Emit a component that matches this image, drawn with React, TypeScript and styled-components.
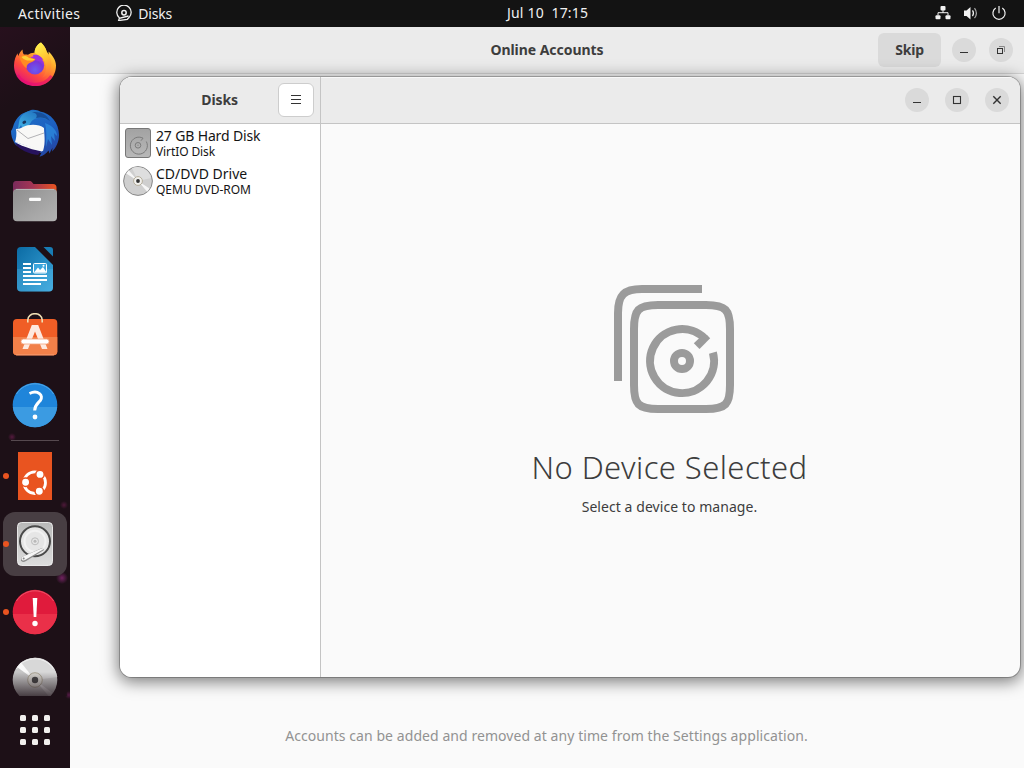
import React from "react";
import styled, { createGlobalStyle } from "styled-components";

const GlobalStyle = createGlobalStyle`
  * { box-sizing: border-box; }
  html, body, #root { margin: 0; width: 1024px; height: 768px; overflow: hidden; }
  body { font-family: "Noto Sans", "Open Sans", sans-serif; font-size: 14px; }
  svg { display: block; flex: none; }
  button { font: inherit; border: 0; padding: 0; margin: 0; color: inherit; }
`;

const Screen = styled.div`
  width: 1024px;
  height: 768px;
  display: flex;
  flex-direction: column;
  background: #1d1017;
`;

const TopBar = styled.header`
  height: 27px;
  flex: none;
  display: grid;
  grid-template-columns: 507px 1fr auto;
  align-items: center;
  padding-bottom: 1px;
  background: #131313;
  color: #f0f0f0;
`;

const BarLeft = styled.div`
  display: flex;
  align-items: center;
  padding-left: 18px;
`;

const BarRight = styled.div`
  display: flex;
  align-items: center;
  gap: 12px;
  padding-right: 17px;
`;

const Label = styled.span<{ $spacing?: number; $size?: number }>`
  font-size: ${(p) => p.$size ?? 14}px;
  letter-spacing: ${(p) => p.$spacing ?? 0}px;
  line-height: 20px;
  white-space: pre;
`;

const BarLabel = styled(Label)`
  padding-top: 2px;
`;

const AppMenu = styled.div`
  display: flex;
  align-items: center;
  gap: 6px;
  margin-left: 36px;
`;

const Workspace = styled.div`
  flex: 1;
  min-height: 0;
  display: flex;
`;

const Dock = styled.nav`
  width: 70px;
  flex: none;
  display: flex;
  flex-direction: column;
  align-items: center;
  gap: 4px;
  padding-top: 6px;
  background:
    radial-gradient(circle at 62px 551px, rgba(140, 40, 120, 0.75), transparent 6px),
    radial-gradient(circle at 64px 478px, rgba(110, 30, 80, 0.6), transparent 4px),
    radial-gradient(circle at 12px 410px, rgba(110, 30, 80, 0.7), transparent 4px),
    radial-gradient(circle at 69px 668px, rgba(110, 30, 90, 0.7), transparent 4px),
    linear-gradient(145deg, #27101d 0, #1d1017 70px, #1d1017 100%);
`;

const DockItem = styled.div<{ $active?: boolean; $clipped?: boolean }>`
  position: relative;
  width: 64px;
  height: ${(p) => (p.$clipped ? 48 : 64)}px;
  flex: none;
  overflow: ${(p) => (p.$clipped ? "hidden" : "visible")};
  display: flex;
  justify-content: center;
  align-items: ${(p) => (p.$clipped ? "flex-start" : "center")};
  padding-top: ${(p) => (p.$clipped ? 8 : 0)}px;
  border-radius: ${(p) => (p.$clipped ? 0 : 12)}px;
  background: ${(p) => (p.$active ? "#483e43" : "transparent")};
`;

const RunningDot = styled.i`
  position: absolute;
  left: 0;
  top: 29px;
  width: 6px;
  height: 6px;
  border-radius: 50%;
  background: #e95420;
`;

const DockSeparator = styled.hr`
  width: 48px;
  height: 1px;
  flex: none;
  margin: -1px 0;
  border: 0;
  background: #56494f;
`;

const BottomFade = styled.div`
  position: absolute;
  inset: 24px 0 0 0;
  background: linear-gradient(rgba(29, 16, 23, 0), rgba(29, 16, 23, 0.75));
`;

const AppsButton = styled.div`
  display: grid;
  grid-template-columns: repeat(3, 6px);
  gap: 6px;
  margin-top: 15px;
`;

const AppsDot = styled.i`
  height: 6px;
  border-radius: 1.5px;
  background: #f2f0ee;
`;

const Desktop = styled.main`
  position: relative;
  flex: 1;
  min-width: 0;
  overflow: hidden;
`;

const AccountsWindow = styled.section`
  height: 100%;
  display: flex;
  flex-direction: column;
  background: #fafafa;
`;

const AccountsHeader = styled.header`
  height: 47px;
  flex: none;
  display: grid;
  grid-template-columns: 1fr auto 1fr;
  align-items: center;
  padding: 0 11px 1px 11px;
  background: #ebebeb;
  border-bottom: 1px solid #d5d5d5;
  color: #3d3d3d;
`;

const Title = styled.h1<{ $spacing?: number }>`
  margin: 0;
  font-size: 14px;
  line-height: 20px;
  font-weight: 700;
  letter-spacing: ${(p) => p.$spacing ?? 0}px;
  color: #3d3d3d;
  white-space: nowrap;
`;

const HeaderActions = styled.div`
  grid-column: 3;
  display: flex;
  justify-content: flex-end;
  align-items: center;
`;

const SkipButton = styled.button`
  width: 63px;
  height: 34px;
  margin-right: 11px;
  border-radius: 6px;
  background: #dadada;
  color: #3d3d3d;
  font-weight: 700;
  letter-spacing: -0.2px;
`;

const RoundButton = styled.button<{ $gap?: number }>`
  width: 24px;
  height: 24px;
  margin-left: ${(p) => p.$gap ?? 0}px;
  display: grid;
  place-items: center;
  border-radius: 50%;
  background: #dadada;
`;

const AccountsBody = styled.div`
  flex: 1;
  display: flex;
  justify-content: center;
  align-items: flex-end;
  padding-bottom: 22px;
  padding-right: 1px;
  color: #929292;
`;

const DisksWindow = styled.section`
  position: absolute;
  left: 50px;
  top: 50px;
  width: 900px;
  height: 600px;
  display: grid;
  grid-template-columns: 201px 1fr;
  border-radius: 12px;
  overflow: hidden;
  background: #fafafa;
  box-shadow: 0 0 0 1px rgba(0, 0, 0, 0.23), 0 3px 16px 2px rgba(0, 0, 0, 0.5);
`;

const Sidebar = styled.aside`
  display: flex;
  flex-direction: column;
  background: #fff;
  border-right: 1px solid #c4c4c4;
`;

const Pane = styled.div`
  display: flex;
  flex-direction: column;
`;

const PaneHeader = styled.header`
  height: 47px;
  flex: none;
  display: flex;
  align-items: center;
  justify-content: flex-end;
  gap: 16px;
  padding-right: 11px;
  background: #ebebeb;
  border-bottom: 1px solid #c4c4c4;
  box-shadow: inset 0 1px #f8f8f8;
`;

const SidebarHeader = styled(PaneHeader)`
  padding-right: 6px;
  gap: 40px;
`;

const MenuButton = styled.button`
  width: 36px;
  height: 34px;
  display: grid;
  place-items: center;
  border: 1px solid #cdcdcd;
  border-radius: 6px;
  background: #fff;
`;

const DeviceRow = styled.div`
  height: 38px;
  display: flex;
  align-items: center;
  padding-left: 3px;
  gap: 3px;
  color: #141414;
`;

const DeviceText = styled.div`
  display: flex;
  flex-direction: column;
  padding-top: 1px;
`;

const DeviceName = styled.span<{ $spacing: number }>`
  font-size: 14px;
  line-height: 16px;
  letter-spacing: ${(p) => p.$spacing}px;
`;

const DeviceModel = styled.span<{ $spacing: number }>`
  font-size: 12px;
  line-height: 15px;
  letter-spacing: ${(p) => p.$spacing}px;
`;

const EmptyState = styled.div`
  flex: 1;
  display: flex;
  flex-direction: column;
  align-items: center;
  padding-top: 161px;
  padding-right: 2px;
  color: #3d3d3d;
`;

const Artwork = styled.div`
  padding-left: 8px;
`;

const EmptyHeading = styled.h2`
  margin: 31px 0 0;
  font-size: 31px;
  font-weight: 300;
  line-height: 46px;
  letter-spacing: 0.42px;
`;

const EmptyHint = styled.p`
  margin: 7px 0 0;
  line-height: 20px;
  letter-spacing: 0.06px;
`;

const FirefoxIcon = () => (
  <svg width="48" height="48" viewBox="0 0 48 48">
    <defs>
      <linearGradient id="ffBody" x1="0.85" y1="0.05" x2="0.25" y2="1">
        <stop offset="0" stopColor="#fff44f" />
        <stop offset="0.35" stopColor="#ffa52a" />
        <stop offset="0.68" stopColor="#ff4a3c" />
        <stop offset="1" stopColor="#e00d83" />
      </linearGradient>
      <radialGradient id="ffGlobe" cx="0.5" cy="0.75" r="0.75">
        <stop offset="0" stopColor="#6a5cf0" />
        <stop offset="0.6" stopColor="#7a35d8" />
        <stop offset="1" stopColor="#b833e1" />
      </radialGradient>
      <linearGradient id="ffTail" x1="0.4" y1="0" x2="0.7" y2="1">
        <stop offset="0" stopColor="#fff04d" />
        <stop offset="0.5" stopColor="#ffc02f" />
        <stop offset="1" stopColor="#ff7139" stopOpacity="0.2" />
      </linearGradient>
    </defs>
    <path fill="url(#ffBody)" d="M30 1.600c3 3 4.900 5.600 5.700 9 .8 1 1.300 2 1.600 3.200.4-1 .4-1.900.2-3.200 3.600 3 7.500 9 7.500 13.800C45 36 36 45 24 45S3 36 3 24.500c0-5.600 1.900-9.700 3.600-12.300.1 1.200.3 2 .8 2.900.9-3 2.300-5 4.200-6.600-.1 2 .3 3.800 1.300 5.100 1-.2 2.700-.1 4.100.2 1.900-1.500 4.100-2.300 6.600-2.100C23.800 7.500 26 3.600 30 1.600z" />
    <path fill="url(#ffTail)" d="M30 1.600c3 3 5 6.200 5.700 9.500 3.800 5 6.800 13 2.500 20.500-1.800 3-4.200 4.400-7 4.800 4.500-4 5.300-11.900 1.300-18.400C29.600 14.800 25.500 13.500 23.600 11.700 23.800 7.500 26 3.600 30 1.600z" />
    <circle cx="24" cy="24.200" r="9.200" fill="url(#ffGlobe)" />
    <path fill="#9a34df" d="M22 14c4-1 8.600 1 10 5l-3.800-1.300.8 2.800c-2.600-1.700-4.500-.7-6-2.500z" />
    <path fill="#ff8b22" d="M8.500 16.200c2.300-2 5.700-2.600 8.600-1.600 1.600.6 2.200 2 3.800 2.500l3.500.9c-.5 2-2.500 2.500-4.100 3.200-3.100 1.100-5.100 3-4.500 6.200-3.400-2.200-6-6.500-7.300-11.200z" />
    <path fill="#ffcf36" d="M10.500 16c2.300-1.300 5-1.500 7.500 1l5.800 1.200c-1.200 1.500-3.400 1.300-5.500 1.400-2.800 0-5.600-1-7.800-3.600z" />
    <path fill="none" stroke="#e60c72" strokeOpacity=".6" strokeWidth="3" d="M6.500 34c3 5.500 10 9.400 17.500 9.400 6.500 0 13-2.800 16.500-8.500" />
  </svg>
);

const ThunderbirdIcon = () => (
  <svg width="48" height="48" viewBox="0 0 48 48">
    <defs>
      <linearGradient id="tbBody" x1="0.2" y1="0" x2="0.8" y2="1">
        <stop offset="0" stopColor="#1e72c8" />
        <stop offset="0.55" stopColor="#1d5fc0" />
        <stop offset="1" stopColor="#2443a0" />
      </linearGradient>
      <linearGradient id="tbHead" x1="0" y1="1" x2="1" y2="0">
        <stop offset="0" stopColor="#42b5e8" />
        <stop offset="1" stopColor="#1a66b8" />
      </linearGradient>
    </defs>
    <path fill="url(#tbBody)" d="M20 1c3-.9 7 .1 9 1.400C40 4 48 14 48 26c0 7-3 13-7 16.500l.5-4-3 6-1-3c-2 3-5 5-9 6.200l2-4C21 45 8 39 4 35 1 30 0 26 0 22c1-1 1.500-3 2-4C4 10 9 5 14 3.400z" />
    <path fill="url(#tbHead)" d="M8 13C9 6 16 1 24 2c6 0 10 4 12 9-4-3-10-3-14 0-3 2-3 6-7 8-2 1-4 0-5-3-1 2-2 3-3 4z" />
    <path fill="#174f99" d="M24 3c7 0 12 3 15 9-5-4-10-4-14-3 2-3 0-5-4-6z" />
    <path fill="#f8f8f6" d="M5 20c3 0 5-1 7-2 6-3 16-3 21 1 0 6 2 14-1 23L4 33c1-3 2-8 1-13z" />
    <path fill="none" stroke="#a9a9ad" strokeWidth=".9" d="M6 21l11 8.500L33 24" />
    <path fill="#27135e" d="M4 34l26 8.500-3 3.500C18 45 8 41 4 34z" />
    <path fill="#f8f8f6" d="M4 33l28 8-1 1.500C23 41 12 38 4 33z" />
    <path fill="#2c88dd" fillOpacity=".8" d="M34 14c8 3 12 8 12 13l-3-3 1 8-4-5 1 9-4-6-2 8c0-8 1-16-1-24z" />
    <ellipse cx="13.300" cy="13.200" rx="2" ry="1.500" fill="#17355e" transform="rotate(-30 13.300 13.200)" />
  </svg>
);

const FilesIcon = () => (
  <svg width="48" height="48" viewBox="0 0 48 48">
    <defs>
      <linearGradient id="fiBack" x1="0" y1="0" x2="1" y2="0">
        <stop offset="0" stopColor="#7a2b5c" />
        <stop offset="0.45" stopColor="#a43554" />
        <stop offset="1" stopColor="#ea5420" />
      </linearGradient>
      <linearGradient id="fiFront" x1="0" y1="0" x2="1" y2="1">
        <stop offset="0" stopColor="#8f8f8f" />
        <stop offset="0.7" stopColor="#a9a9a9" />
        <stop offset="1" stopColor="#b2b2b2" />
      </linearGradient>
    </defs>
    <path fill="url(#fiBack)" d="M5 4h14q1 0 2 1.200L22.500 7H42q3.500 0 3.500 3.500V22H2V7.500Q2 4 5 4z" />
    <rect x="2" y="12" width="44" height="32.300" rx="4" fill="url(#fiFront)" />
    <path stroke="#c4c4c4" strokeWidth=".8" d="M5 12.400h38" />
    <rect x="18" y="20.700" width="12" height="3.200" rx="1.200" fill="#fafafa" />
  </svg>
);

const WriterIcon = () => (
  <svg width="48" height="48" viewBox="0 0 48 48">
    <defs>
      <linearGradient id="wrBody" x1="0" y1="0" x2="1" y2="1">
        <stop offset="0" stopColor="#0b6ba4" />
        <stop offset="1" stopColor="#3da7dc" />
      </linearGradient>
    </defs>
    <path fill="url(#wrBody)" d="M10 2h14l18 18v22.500q0 4-4 4H10q-4 0-4-4V6Q6 2 10 2z" />
    <path fill="#63c0ea" fillOpacity=".25" d="M6 24H42v18.500q0 4-4 4H10q-4 0-4-4z" />
    <path fill="#187db5" d="M32.500 2H39q3 0 3 3v6.500z" />
    <path stroke="#fff" strokeWidth="2" d="M12 19h8M12 23h8M12 27h8M12 31h24M12 35h24M12 39h18" />
    <rect x="22.500" y="18.500" width="13" height="9.500" rx="1" fill="#3aa5dd" stroke="#fff" />
    <path fill="#fff" d="M23 27.500l4-5 2 2.500 3-3 3.500 5.500z" />
    <circle cx="32.500" cy="20.800" r="1" fill="#fff" />
  </svg>
);

const SoftwareIcon = () => (
  <svg width="48" height="48" viewBox="0 0 48 48">
    <rect x="2" y="6" width="44.300" height="36.300" rx="4" fill="#f05e26" />
    <path fill="#f28049" d="M2 24H46.300v14.300q0 4-4 4H6q-4 0-4-4z" />
    <path fill="none" stroke="#f6a37c" strokeWidth=".8" d="M5 41.900h38" />
    <path fill="none" stroke="#f0dfb4" strokeWidth="1.600" d="M16.800 9.500V7C16.800-1.400 31.200-1.400 31.200 7v2.500" />
    <path fill="#fde9df" d="M20.800 12h6.400L36.500 36H31L24 18.500 17 36h-5.500z" />
    <rect x="10" y="26" width="28" height="5" rx="2.500" fill="#fff" stroke="#f4a27c" strokeWidth=".8" />
  </svg>
);

const HelpIcon = () => (
  <svg width="48" height="48" viewBox="0 0 48 48">
    <circle cx="24" cy="24" r="22.300" fill="#1f85da" />
    <path fill="#3b9be2" d="M1.800 26h44.400A22.300 22.300 0 0 1 1.800 26z" />
    <path fill="none" stroke="#5aafe9" strokeWidth=".8" d="M5.500 13A21.900 21.900 0 0 1 42.500 13" />
    <path fill="none" stroke="#fff" strokeWidth="3" d="M18.500 12.500C27 8.500 33 14.500 29.300 19.500c-2.500 3-5.600 4.500-5.600 10" />
    <circle cx="24" cy="36" r="2.400" fill="#fff" />
  </svg>
);

const InstallerIcon = () => (
  <svg width="48" height="48" viewBox="0 0 48 48">
    <path fill="#e95420" d="M7 0h34v48H7z" />
    <circle cx="23.700" cy="30.700" r="10.800" fill="none" stroke="#fff" strokeWidth="2.800" />
    <g fill="#fff" stroke="#e95420" strokeWidth="1.500">
      <circle cx="14.600" cy="30.300" r="4.200" />
      <circle cx="29" cy="22.400" r="4.200" />
      <circle cx="28.300" cy="39.200" r="4.200" />
    </g>
  </svg>
);

const DisksIcon = () => (
  <svg width="48" height="48" viewBox="0 0 48 48">
    <defs>
      <linearGradient id="dkCase" x1="0" y1="0" x2="0" y2="1">
        <stop offset="0" stopColor="#b9b9b9" />
        <stop offset="1" stopColor="#dddddd" />
      </linearGradient>
    </defs>
    <rect x="6.500" y="2.500" width="35" height="43" rx="4" fill="url(#dkCase)" stroke="#f2f2f2" strokeWidth=".9" />
    <circle cx="24" cy="21.300" r="15" fill="#e6e6e6" stroke="#4a4a4a" strokeWidth="2" />
    <circle cx="24" cy="21.300" r="10.500" fill="none" stroke="#f2f2f2" strokeWidth="2" />
    <circle cx="24" cy="21.300" r="3.500" fill="none" stroke="#bcbcbc" strokeWidth="1" />
    <circle cx="24" cy="21.300" r="1.500" fill="#b9b9b9" />
    <path fill="#8c8c8c" d="M11 37L31.500 27.800 33 30 15.500 40.800Q11 43.500 10 40.300 9.700 38 11 37z" />
    <path fill="#f6f6f6" d="M11.500 36.800L31.600 28 32.400 29.300 14.500 39.800Q11.500 41.500 10.500 39.300 10 37.600 11.500 36.800z" />
    <circle cx="12.700" cy="38.500" r="1" fill="#8a8a8a" />
  </svg>
);

const AlertIcon = () => (
  <svg width="48" height="48" viewBox="0 0 48 48">
    <circle cx="24" cy="24" r="22.300" fill="#e01b3c" />
    <path fill="#ea3049" d="M1.800 26h44.400A22.300 22.300 0 0 1 1.800 26z" />
    <path fill="none" stroke="#ef5f72" strokeWidth=".8" d="M5.500 13A21.900 21.900 0 0 1 42.500 13" />
    <path fill="#fff" d="M21.700 10h4.600l-1 19h-2.600z" />
    <circle cx="24" cy="35.500" r="2.700" fill="#fff" />
  </svg>
);

const DiscIcon = () => (
  <svg width="48" height="48" viewBox="0 0 48 48">
    <circle cx="24" cy="24" r="22.300" fill="#c6c6c6" />
    <path fill="#d8d8d8" d="M24 24L8 8.500A22.300 22.300 0 0 1 24 1.700zM24 24l22.300-3A22.300 22.300 0 0 0 24 1.700z" />
    <path fill="#f9f9f9" d="M24 24L6 11l4-4.500z" />
    <path fill="#e4e4e4" d="M24 24l17.500 13-3 4z" />
    <path fill="none" stroke="#f5f5f5" strokeWidth=".8" d="M5.500 13A21.900 21.900 0 0 1 42.500 13" />
    <circle cx="24" cy="24" r="7.300" fill="#d7d5cf" stroke="#aaa392" strokeWidth="1" />
    <circle cx="24" cy="24" r="3.200" fill="#484848" />
  </svg>
);

const MenuDiskGlyph = () => (
  <svg width="16" height="16" viewBox="0 0 16 16" fill="none" stroke="#f0f0f0">
    <path strokeWidth="1.300" d="M3.300 12.800A7.200 7.200 0 1 1 13 12.500L11.300 14.300 4 15.300H2.700L3.300 13.300 12.500 11" />
    <circle cx="8" cy="7.700" r="2.200" strokeWidth="1.500" />
  </svg>
);

const NetworkGlyph = () => (
  <svg width="16" height="16" viewBox="0 0 16 16" fill="#f2f2f2">
    <rect x="5.500" y="1" width="5" height="4.500" rx="1" />
    <rect x="0.500" y="10.300" width="5" height="4" rx="1" />
    <rect x="10.500" y="10.300" width="5" height="4" rx="1" />
    <path fill="none" stroke="#f2f2f2" d="M8 5v3M3 10.500V7.700h10v2.800" />
  </svg>
);

const VolumeGlyph = () => (
  <svg width="16" height="16" viewBox="0 0 16 16">
    <path fill="#f2f2f2" d="M1 5.500h2.500L7.500 2v12.500L3.500 11H1z" />
    <path fill="none" stroke="#f2f2f2" strokeWidth="1.200" d="M9.500 5.300q2 2.900 0 5.800" />
    <path fill="none" stroke="#aaa" strokeWidth="1.200" d="M11.500 3.200q3.800 5 0 10" />
  </svg>
);

const PowerGlyph = () => (
  <svg width="16" height="16" viewBox="0 0 16 16" fill="none" stroke="#f2f2f2" strokeWidth="1.200">
    <path d="M4.700 3.100A6.100 6.100 0 1 0 11.300 3.100M8 1v7.300" />
  </svg>
);

const WindowGlyph = ({ kind }: { kind: "minimize" | "maximize" | "restore" | "close" }) => (
  <svg width="16" height="16" viewBox="0 0 16 16" fill="none" stroke="#333">
    {kind === "minimize" && <path d="M4 10.500h8" />}
    {kind === "maximize" && <rect x="4.500" y="4.500" width="7" height="7" strokeWidth="1.100" />}
    {kind === "restore" && (
      <>
        <rect x="4.500" y="6.500" width="5" height="5" />
        <path stroke="#888" d="M6 4.500h5.500V10" />
      </>
    )}
    {kind === "close" && <path strokeWidth="1.400" d="M4.300 4.300l7.400 7.400M11.700 4.300L4.300 11.700" />}
  </svg>
);

const MenuGlyph = () => (
  <svg width="16" height="16" viewBox="0 0 16 16" stroke="#333">
    <path d="M3 3.500h10M3 7.500h10M3 11.500h10" />
  </svg>
);

const HardDiskGlyph = () => (
  <svg width="30" height="30" viewBox="0 0 30 30">
    <defs>
      <linearGradient id="hdCase" x1="0" y1="0" x2="0" y2="1">
        <stop offset="0" stopColor="#a2a2a2" />
        <stop offset="1" stopColor="#b9b9b9" />
      </linearGradient>
    </defs>
    <rect x="2.500" y=".5" width="25" height="29" rx="2.500" fill="url(#hdCase)" stroke="#777" />
    <path fill="none" stroke="#7b7b7b" d="M23.300 13.500A8.500 8.500 0 1 1 20 10.200l-2 2.500" />
    <circle cx="15" cy="17.300" r="2.800" fill="none" stroke="#7b7b7b" />
    <circle cx="15" cy="17.300" r=".7" fill="#8a8a8a" />
  </svg>
);

const OpticalGlyph = () => (
  <svg width="30" height="30" viewBox="0 0 30 30">
    <circle cx="15" cy="15" r="14.400" fill="#cfcfcf" stroke="#888" />
    <path fill="#dedede" d="M15 15L9 2A14 14 0 0 1 28 12z" />
    <path fill="#f6f6f6" d="M15 15L3.200 7.500l2.500-3.200zM15 15l11.600 7.500-2.400 3.200z" />
    <circle cx="15" cy="15" r="4.400" fill="#f2f1ee" stroke="#b0a894" strokeWidth=".9" />
    <circle cx="15" cy="15" r="1.900" fill="#333" />
  </svg>
);

const DrivesArtwork = () => (
  <svg width="120" height="128" viewBox="0 0 120 128" fill="none" stroke="#9b9b9b" strokeWidth="8">
    <path d="M4 96V28C4 10 10 4 28 4H88" />
    <path d="M44 20H92C112 20 116 25 116 44V100C116 119 112 124 92 124H44C24 124 20 119 20 100V44C20 25 24 20 44 20Z" />
    <circle cx="68" cy="76" r="8" />
    <path d="M98.900 67.600A32 32 0 1 1 90.600 53.400" />
    <path fill="#9b9b9b" stroke="none" d="M96.200 53.200L85.500 64L79.800 58.300L87 51.500L93 50Z" />
  </svg>
);

const dockApps: { name: string; Icon: React.FC }[] = [
  { name: "firefox", Icon: FirefoxIcon },
  { name: "thunderbird", Icon: ThunderbirdIcon },
  { name: "files", Icon: FilesIcon },
  { name: "writer", Icon: WriterIcon },
  { name: "software", Icon: SoftwareIcon },
  { name: "help", Icon: HelpIcon },
];

const runningApps: { name: string; Icon: React.FC; active?: boolean }[] = [
  { name: "installer", Icon: InstallerIcon },
  { name: "disks", Icon: DisksIcon, active: true },
  { name: "alert", Icon: AlertIcon },
];

export default function App() {
  return (
    <>
      <GlobalStyle />
      <Screen>
        <TopBar>
          <BarLeft>
            <BarLabel $spacing={0.4}>Activities</BarLabel>
            <AppMenu>
              <MenuDiskGlyph />
              <BarLabel $spacing={-0.2}>Disks</BarLabel>
            </AppMenu>
          </BarLeft>
          <Label $spacing={0.18}>Jul 10  17:15</Label>
          <BarRight>
            <NetworkGlyph />
            <VolumeGlyph />
            <PowerGlyph />
          </BarRight>
        </TopBar>
        <Workspace>
          <Dock>
            {dockApps.map(({ name, Icon }) => (
              <DockItem key={name}>
                <Icon />
              </DockItem>
            ))}
            <DockSeparator />
            {runningApps.map(({ name, Icon, active }) => (
              <DockItem key={name} $active={active}>
                <RunningDot />
                <Icon />
              </DockItem>
            ))}
            <DockItem $clipped>
              <DiscIcon />
              <BottomFade />
            </DockItem>
            <AppsButton>
              {Array.from({ length: 9 }, (_, i) => (
                <AppsDot key={i} />
              ))}
            </AppsButton>
          </Dock>
          <Desktop>
            <AccountsWindow>
              <AccountsHeader>
                <span />
                <Title $spacing={-0.04}>Online Accounts</Title>
                <HeaderActions>
                  <SkipButton>Skip</SkipButton>
                  <RoundButton>
                    <WindowGlyph kind="minimize" />
                  </RoundButton>
                  <RoundButton $gap={13}>
                    <WindowGlyph kind="restore" />
                  </RoundButton>
                </HeaderActions>
              </AccountsHeader>
              <AccountsBody>
                <Label $spacing={0.065}>
                  Accounts can be added and removed at any time from the Settings application.
                </Label>
              </AccountsBody>
            </AccountsWindow>
            <DisksWindow>
              <Sidebar>
                <SidebarHeader>
                  <Title $spacing={-0.1}>Disks</Title>
                  <MenuButton>
                    <MenuGlyph />
                  </MenuButton>
                </SidebarHeader>
                <DeviceRow>
                  <HardDiskGlyph />
                  <DeviceText>
                    <DeviceName $spacing={-0.15}>27 GB Hard Disk</DeviceName>
                    <DeviceModel $spacing={-0.1}>VirtIO Disk</DeviceModel>
                  </DeviceText>
                </DeviceRow>
                <DeviceRow>
                  <OpticalGlyph />
                  <DeviceText>
                    <DeviceName $spacing={0}>CD/DVD Drive</DeviceName>
                    <DeviceModel $spacing={0}>QEMU DVD-ROM</DeviceModel>
                  </DeviceText>
                </DeviceRow>
              </Sidebar>
              <Pane>
                <PaneHeader>
                  <RoundButton>
                    <WindowGlyph kind="minimize" />
                  </RoundButton>
                  <RoundButton>
                    <WindowGlyph kind="maximize" />
                  </RoundButton>
                  <RoundButton>
                    <WindowGlyph kind="close" />
                  </RoundButton>
                </PaneHeader>
                <EmptyState>
                  <Artwork>
                    <DrivesArtwork />
                  </Artwork>
                  <EmptyHeading>No Device Selected</EmptyHeading>
                  <EmptyHint>Select a device to manage.</EmptyHint>
                </EmptyState>
              </Pane>
            </DisksWindow>
          </Desktop>
        </Workspace>
      </Screen>
    </>
  );
}
